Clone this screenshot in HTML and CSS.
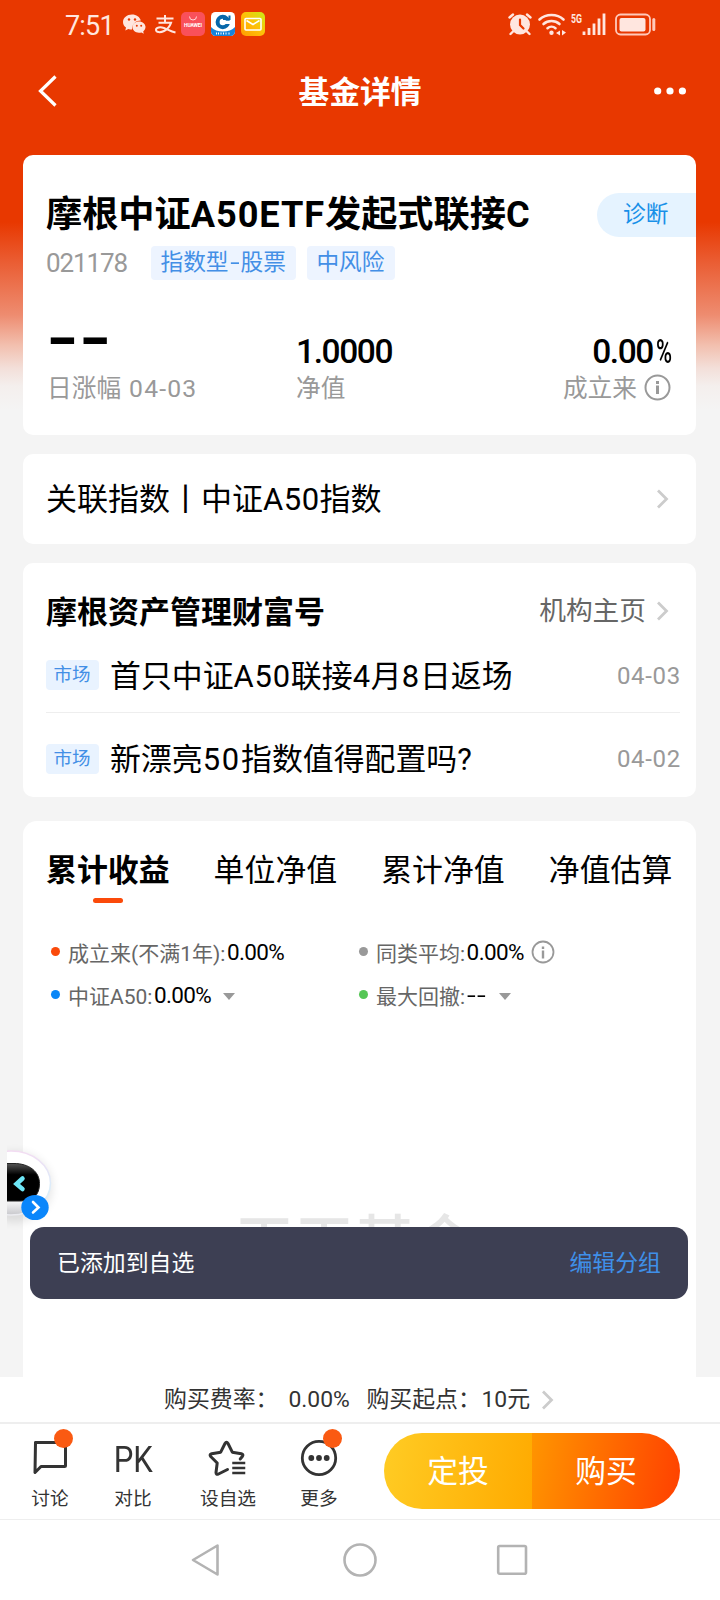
FILE: index.html
```html
<!DOCTYPE html>
<html lang="zh-CN">
<head>
<meta charset="utf-8">
<title>基金详情</title>
<link rel="stylesheet" href="styles.css">
</head>
<body>
<main class="page">
  <header class="status">
    <span class="clock">7:51</span>
    <div class="status-apps">
      <svg class="wechat" width="24" height="24" viewBox="0 0 24 24"><path fill="#ffe6df" d="M9 2.500C4 2.500 0 5.700 0 10c0 2.300 1.200 4.200 3 5.600L2.300 18.500l3-1.600c1.200.4 2.600.5 3.700.5C9 12 13 8.600 17.800 8.600 17 5 13.300 2.500 9 2.500z"/><circle cx="6" cy="7.500" r="1.200" fill="#e83800"/><circle cx="12" cy="7.500" r="1.200" fill="#e83800"/><path fill="#ffe6df" d="M16 9.500c-4 0-6.600 2.600-6.600 5.600s2.800 5.700 6.600 5.700c.8 0 1.700-.1 2.400-.4l2.400 1.300-.6-2.200c1.300-1 2.300-2.600 2.300-4.400 0-3-2.800-5.600-6.500-5.600z"/><circle cx="13.800" cy="13.700" r="1" fill="#e83800"/><circle cx="18.200" cy="13.700" r="1" fill="#e83800"/></svg>
      <svg class="alipay" width="24" height="24" viewBox="0 0 24 24" fill="none" stroke="#ffe6df" stroke-width="2"><path d="M3.500 6.500h17M12 3v7.500M5.500 10.800h12.500c-1.300 3.700-4 6.700-7 8.200-3.500 1.700-8 1.600-8-1.200 0-2.600 4.500-3.100 8-1.800 3.500 1.300 7 3.500 11.500 4.500"/></svg>
      <svg width="24" height="24" viewBox="0 0 24 24"><rect width="24" height="24" rx="5" fill="#f9505a"/><path d="M8.500 4.500a3.500 3.500 0 0 0 7 0" fill="none" stroke="#ffd9d9"/><text x="12" y="15" text-anchor="middle" textLength="18" class="tiny-logo">HUAWEI</text></svg>
      <svg width="24" height="24" viewBox="0 0 24 24"><rect width="24" height="24" rx="4.500" fill="#fff"/><path d="M0 15c5 6 19 6 24 0v4.500a4.500 4.500 0 0 1-4.500 4.500h-15A4.500 4.500 0 0 1 0 19.500z" fill="#1684dc"/><circle cx="11.800" cy="10" r="5.200" fill="none" stroke="#0768aa" stroke-width="4"/><path d="M11.500 8.700h9v3.300h-9z" fill="#fff"/><path d="M12 7h6.500v-3.500" fill="none" stroke="#0768aa" stroke-width="2"/><path d="M5.500 20.500v2M7.500 20.500v2M10 20.500v2M12.500 20.500v2M15 20.500v2M18 20.500v2" stroke="#fff"/></svg>
      <svg width="24" height="24" viewBox="0 0 24 24"><defs><linearGradient id="mail" x1="0" y1="1" x2="1" y2="0"><stop offset="0" stop-color="#ff9d00"/><stop offset=".5" stop-color="#ffbf08"/><stop offset="1" stop-color="#c9ec17"/></linearGradient></defs><rect width="24" height="24" rx="5" fill="url(#mail)"/><rect x="4" y="6.500" width="16" height="11.500" rx="1" fill="none" stroke="#fff" stroke-width="1.600"/><path d="M5.500 8.500l6.500 4 6.500-4" fill="none" stroke="#fff" stroke-width="1.600"/></svg>
    </div>
    <div class="status-sys">
      <svg width="24" height="24" viewBox="0 0 24 24"><circle cx="12" cy="12.500" r="10" fill="#ffe6df"/><path d="M1.500 5.500L5 2.500M22.500 5.500L19 2.500M5 19.500l-2.500 2.500M19 19.500l2.500 2.500" stroke="#ffe6df" stroke-width="2.400" stroke-linecap="round"/><path d="M12 7.500v5.500l3.500 3.500" fill="none" stroke="#e83800" stroke-width="2.200" stroke-linecap="round"/></svg>
      <svg class="wifi" width="30" height="24" viewBox="0 0 30 24" fill="none" stroke="#ffe6df" stroke-width="2.600" stroke-linecap="round"><path d="M2.500 7.500c6.500-6 17.500-6 24 0M6.500 12c4.500-4 11.500-4 16 0M10.500 16.200c2.300-2 5.700-2 8 0"/><circle cx="14.500" cy="20.800" r="2.200" fill="#ffe6df" stroke="none"/><path d="M23 18.500v5l-4-2.500zM25 18v5.500l4-3z" fill="#ffe6df" stroke="none"/></svg>
      <svg class="signal" width="36" height="24" viewBox="0 0 36 24"><text x="0" y="10.500" textLength="11" lengthAdjust="spacingAndGlyphs" class="net">5G</text><path d="M13 19.500v3.500M18 16v7M23 11.500v11.500M28 6.500v16.500M33 1.500v21.500" stroke="#ffe6df" stroke-width="2.800"/></svg>
      <svg width="42" height="24" viewBox="0 0 42 24"><rect x="1" y="2.500" width="34" height="20" rx="4.500" fill="none" stroke="#ffc9ba" stroke-width="1.800"/><rect x="4.500" y="6" width="26" height="13.500" rx="2" fill="#ffe6df"/><path d="M38.800 7.500v10" stroke="#ffc9ba" stroke-width="3" stroke-linecap="round"/></svg>
    </div>
  </header>
  <nav class="titlebar">
    <svg width="24" height="36" viewBox="0 0 24 36"><path d="M19.500 3.500L4.500 18l15 14.500" fill="none" stroke="#fff" stroke-width="3.200"/></svg>
    <h1>基金详情</h1>
    <svg width="34" height="10" viewBox="0 0 34 10" fill="#fff"><circle cx="4.700" cy="5" r="3.600"/><circle cx="17" cy="5" r="3.600"/><circle cx="29.400" cy="5" r="3.600"/></svg>
  </nav>

  <section class="card fund">
    <div class="fund-head"><h2>摩根中证<span class="lat">A50ETF</span>发起式联接<span class="lat">C</span></h2><a class="diagnose">诊断</a></div>
    <div class="fund-meta"><span class="code">021178</span><span class="tag">指数型<span class="hy">-</span>股票</span><span class="tag">中风险</span></div>
    <div class="stats">
      <div class="stat"><b class="dashes"><span>--</span></b><span class="stat-label">日涨幅 <span class="date">04-03</span></span></div>
      <div class="stat mid"><b class="num">1.0000</b><span class="stat-label">净值</span></div>
      <div class="stat last"><b class="num">0.00<span class="pct">%</span></b><span class="stat-label">成立来<svg width="27" height="27" viewBox="0 0 27 27"><circle cx="13.500" cy="13.500" r="12" fill="none" stroke="#999" stroke-width="2"/><path d="M13.500 11.500v8.500M13.500 7v3" stroke="#999" stroke-width="3"/></svg></span></div>
    </div>
  </section>

  <section class="card index"><span>关联指数丨中证<span class="lat">A50</span>指数</span><svg class="chev" width="14" height="22" viewBox="0 0 14 22"><path d="M2 2.500l8.500 8.500L2 19.500"/></svg></section>

  <section class="card news">
    <div class="news-head"><h3>摩根资产管理财富号</h3><span class="more-link">机构主页<svg class="chev" width="14" height="22" viewBox="0 0 14 22"><path d="M2 2.500l8.500 8.500L2 19.500"/></svg></span></div>
    <div class="news-row"><span class="mini">市场</span><span class="headline">首只中证<span class="lat">A50</span>联接<span class="lat">4</span>月<span class="lat">8</span>日返场</span><time>04-03</time></div>
    <div class="news-row second"><span class="mini">市场</span><span class="headline">新漂亮<span class="lat wide">50</span>指数值得配置吗<span class="lat">?</span></span><time>04-02</time></div>
  </section>

  <section class="card perf">
    <div class="tabs"><span class="tab on">累计收益</span><span class="tab">单位净值</span><span class="tab">累计净值</span><span class="tab">净值估算</span></div>
    <div class="legend">
      <div><i class="dot red"></i><span>成立来(不满1年):</span><b>0.00%</b></div>
      <div><i class="dot gray"></i><span>同类平均:</span><b>0.00%</b><svg class="info" width="24" height="24" viewBox="0 0 24 24"><circle cx="12" cy="12" r="10.500" fill="none" stroke="#999" stroke-width="1.800"/><path d="M12 10.500v8M12 6.500v2.500" stroke="#999" stroke-width="2.400"/></svg></div>
      <div><i class="dot blue"></i><span>中证A50:</span><b>0.00%</b><i class="tri"></i></div>
      <div><i class="dot green"></i><span>最大回撤:</span><b class="dd">--</b><i class="tri"></i></div>
    </div>
    <div class="watermark">天天基金</div>
  </section>

  <footer>
    <div class="fee"><span>购买费率：</span><span class="rate">0.00%</span><span class="start">购买起点：</span><span class="amount">10元</span><svg class="chev" width="14" height="22" viewBox="0 0 14 22"><path d="M2 2.500l8.500 8.500L2 19.500"/></svg></div>
    <div class="actions">
      <div class="act a1"><svg width="40" height="40" viewBox="0 0 40 40" fill="none" stroke="#333" stroke-width="3" stroke-linejoin="round"><path d="M5.500 6.500h29q1 0 1 1v22q0 1-1 1H11l-6 6z"/></svg><i class="badge"></i><span>讨论</span></div>
      <div class="act a2"><span class="pk">PK</span><span>对比</span></div>
      <div class="act a3"><svg width="40" height="40" viewBox="0 0 40 40" fill="none" stroke="#333" stroke-width="3" stroke-linecap="round" stroke-linejoin="round"><path d="M19.500 32.500L10.500 37q-2.500 1.200-2.500-1.500l1.200-9.500-6.500-6.500q-1.600-2 1-2.800l9-1.500 4.300-8.700q1.500-2.600 3 0l4.300 8.700 9 1.500q2.600.8 1 2.800l-2.100 2.500"/><path d="M25.500 26h10.500M25.500 31h10.500M25.500 36h10.500" stroke-linecap="square" stroke-width="2.500"/></svg><span>设自选</span></div>
      <div class="act a4"><svg width="40" height="40" viewBox="0 0 40 40"><circle cx="20" cy="21" r="16.700" fill="none" stroke="#333" stroke-width="2.800"/><g fill="#333"><circle cx="12.300" cy="21" r="2.900"/><circle cx="20" cy="21" r="2.900"/><circle cx="27.700" cy="21" r="2.900"/></g></svg><i class="badge"></i><span>更多</span></div>
      <div class="cta"><a class="plan">定投</a><a class="buy">购买</a></div>
    </div>
    <div class="sysnav">
      <svg width="32" height="36" viewBox="0 0 32 36"><path d="M3 18L27.500 3.500v29z"/></svg>
      <svg width="36" height="36" viewBox="0 0 36 36"><circle cx="18" cy="18" r="15.500"/></svg>
      <svg width="32" height="36" viewBox="0 0 32 36"><rect x="0.200" y="4" width="27.800" height="27.800" rx="1.500"/></svg>
    </div>
  </footer>

  <svg class="robot" width="58" height="90" viewBox="0 0 58 90"><defs><linearGradient id="shell" x1="0" y1="0" x2="0" y2="1"><stop offset="0" stop-color="#fff"/><stop offset=".75" stop-color="#fff"/><stop offset="1" stop-color="#c8c8cc"/></linearGradient><linearGradient id="rim" x1="0" y1="0" x2="0" y2="1"><stop offset="0" stop-color="#f3dcf2"/><stop offset=".6" stop-color="#d9eefb"/><stop offset="1" stop-color="#ececf0"/></linearGradient><linearGradient id="face" x1="0" y1="0" x2="0" y2="1"><stop offset="0" stop-color="#555"/><stop offset=".3" stop-color="#000"/></linearGradient><filter id="soft" x="-50%" y="-50%" width="200%" height="200%"><feGaussianBlur stdDeviation="5"/></filter></defs>
    <ellipse cx="8" cy="47" rx="37" ry="35" fill="#000" opacity=".1" filter="url(#soft)"/><ellipse cx="4" cy="43" rx="39.500" ry="32" fill="url(#shell)" stroke="url(#rim)" stroke-width="1.500"/><path d="M-6 23.500H7c15 0 25.500 8 25.500 20S26 61 13 61H-6z" fill="url(#face)" stroke="#222"/><path d="M15.500 38.500L9.500 44l6 5" fill="none" stroke="#6ee6f7" stroke-width="4.500" stroke-linecap="round"/><ellipse cx="28" cy="67.500" rx="13.700" ry="12.600" fill="#0a86fb"/><path d="M26 62l5.500 5.500-5.500 5" fill="none" stroke="#fff" stroke-width="2.600" stroke-linecap="round"/></svg>
  <div class="toast"><span>已添加到自选</span><a>编辑分组</a></div>
</main>
</body>
</html>
```
FILE: styles.css
```css
* { box-sizing: border-box; }
body { margin: 0; font-family: Roboto, "Noto Sans CJK SC", sans-serif; color: #000; background: #f4f4f4; }
h1, h2, h3, b, i { margin: 0; font-style: normal; }
svg { display: block; flex: none; }
.page {
  position: relative; width: 720px; height: 1600px; overflow: hidden;
  display: flex; flex-direction: column; align-items: center;
  background: linear-gradient(180deg, #e83800 0, #e83800 222px, #ea5d33 262px, #ee8c70 315px, #f2bfae 345px, #f3dfd9 368px, #f4efed 386px, #f4f4f4 410px);
}
.page > * { flex: none; white-space: nowrap; }

.status { width: 100%; height: 48px; display: flex; align-items: center; padding: 0 63px 0 65px; color: #ffe6df; }
.clock { font-size: 27px; line-height: 32px; width: 58px; letter-spacing: -0.8px; padding-top: 3px; }
.status-apps { display: flex; gap: 6px; }
.alipay { margin: 0 -1px 0 0; }
.status-apps svg:nth-child(3) { margin-left: -1px; }
.status-sys { display: flex; margin-left: auto; align-items: center; }
.wifi { margin-left: 5px; }
.signal { margin: 0 8px 0 4px; }
.net { font-size: 12px; font-weight: 700; fill: #ffe6df; }
.tiny-logo { font-size: 5px; font-weight: 700; fill: #fff; }

.titlebar { width: 100%; height: 107px; display: flex; align-items: flex-start; justify-content: space-between; padding: 0 33px 0 36px; }
.titlebar svg:first-child { margin-top: 25px; margin-right: 7px; }
.titlebar svg:last-child { margin-top: 38px; }
.titlebar h1 { font-size: 30.800px; line-height: 40px; font-weight: 700; color: #fff; margin-top: 25px; }

.card { width: 673px; margin-left: -1px; background: #fff; border-radius: 10px; padding-left: 23px; }
.fund { height: 280px; overflow: hidden; margin-bottom: 19px; }
.fund-head { display: flex; justify-content: space-between; padding-top: 38px; height: 88px; }
.fund-head h2 { font-size: 36.200px; line-height: 44px; font-weight: 700; }
.fund-head .lat { letter-spacing: .9px; }
.diagnose { width: 99px; height: 44px; border-radius: 22px 0 0 22px; background: #e5f3ff; color: #1890e8; font-size: 22.700px; line-height: 44px; padding-left: 26px; }
.fund-meta { display: flex; padding-top: 3px; height: 79px; align-items: flex-start; line-height: 34px; }
.code { width: 105px; font-size: 26px; color: #999; letter-spacing: -1.100px; }
.tag { height: 34px; border-radius: 4px; background: #edf4ff; color: #438fe6; font-size: 22.700px; line-height: 34px; padding: 0 10px 0 9.500px; margin-right: 11px; }
.hy { display: inline-block; width: 12px; text-align: center; transform: scaleX(1.500); }
.stats { display: flex; padding-right: 25px; }
.stat { display: flex; flex-direction: column; width: 250px; }
.stat.mid { width: 200px; }
.stat.last { margin-left: auto; width: auto; align-items: flex-end; }
.num, .dashes { font-weight: 500; font-size: 33.500px; line-height: 44px; height: 44px; letter-spacing: -1.400px; }
.stat .num { padding-top: 8px; line-height: 44px; }
.pct { display: inline-block; width: 15px; transform: scaleX(.65); transform-origin: left; margin-left: 3px; }
.dashes span { display: inline-block; transform: scaleX(1.410); transform-origin: left; font-weight: 700; font-size: 60px; line-height: 34px; letter-spacing: -.5px; }
.stat-label { display: flex; align-items: center; font-size: 24.700px; line-height: 36px; height: 36px; margin-top: 5px; color: #999; }
.stat:first-child .stat-label { padding-left: 1px; }
.date { letter-spacing: 1.200px; margin-left: 8px; }
.stat-label svg { margin-left: 7px; margin-top: -4px; }

.index { height: 90px; display: flex; align-items: center; justify-content: space-between; padding-right: 26px; font-size: 31px; line-height: 40px; margin-bottom: 19px; }
.index > span { padding-top: 1px; }
.index .lat { letter-spacing: .5px; }
.lat { letter-spacing: .8px; }
.chev path { fill: none; stroke: #ccc; stroke-width: 2.800; }

.news { height: 234px; margin-bottom: 24px; padding-right: 16px; }
.news-head { display: flex; justify-content: space-between; align-items: center; height: 97px; padding-right: 10px; }
.news-head h3 { font-size: 31px; line-height: 40px; font-weight: 700; padding-top: 2px; }
.more-link { display: flex; align-items: center; gap: 10px; font-size: 26.700px; color: #666; line-height: 34px; padding-bottom: 2px; }
.news-row { display: flex; align-items: center; padding-bottom: 21px; border-bottom: 1px solid #eee; height: 53px; }
.news-row.second { border: 0; padding: 0; height: 92px; }
.mini { width: 53px; height: 30px; border-radius: 4px; background: #e9f3ff; color: #438fe6; text-align: center; font-size: 18.500px; line-height: 30px; margin-right: 11px; margin-top: -1px; padding-right: 1px; }
.second .mini { margin-top: 0; }
.headline { font-size: 30.900px; line-height: 30px; padding-top: 2px; }
.headline .wide { letter-spacing: 1.800px; }
time { margin-left: auto; font-size: 24px; color: #999; letter-spacing: .7px; margin-right: -1px; }

.perf { height: 556px; border-radius: 14px 14px 0 0; overflow: hidden; }
.tabs { display: flex; padding-top: 29px; height: 109px; }
.tab { flex: none; width: 167.600px; font-size: 30.900px; line-height: 41px; position: relative; }
.tab.on { font-weight: 700; }
.tab.on::after { content: ""; position: absolute; left: 47px; top: 48px; width: 30px; height: 5px; border-radius: 3px; background: #fb4a0a; }
.legend { display: grid; grid-template-columns: 308px 300px; grid-auto-rows: 43px; font-size: 21px; color: #666; padding-left: 5px; }
.legend div { display: flex; align-items: center; }
.legend b { font-weight: 400; color: #000; font-size: 22.500px; margin-left: 1.500px; letter-spacing: -.6px; padding-top: 1px; }
.legend .dd { width: 20px; transform: scaleX(1.400); transform-origin: left; letter-spacing: 1px; }
.dot { width: 9px; height: 9px; border-radius: 50%; margin-right: 8px; }
.red { background: #fa4a0a; } .gray { background: #999; } .blue { background: #0a87f7; } .green { background: #55c655; }
.info { margin-left: 7px; }
.tri { border: 6px solid transparent; border-top: 7px solid #999; border-bottom: 0; margin-left: 12px; margin-top: 3px; }
.watermark { font-size: 60px; line-height: 70px; font-weight: 500; color: #e6e6e6; text-align: center; padding: 194px 33px 0 0; }

footer { width: 720px; height: 223px; background: #fff; color: #333; }
.fee { height: 47px; border-bottom: 2px solid #eee; display: flex; align-items: center; padding-left: 164px; font-size: 22.900px; line-height: 44px; }
.rate { width: 78px; margin-left: 10px; letter-spacing: 0; }
.start { width: 115px; }
.amount { width: 60px; }
.actions { height: 96px; border-bottom: 1px solid #eee; display: flex; }
.act { display: flex; flex-direction: column; align-items: center; position: relative; width: 84px; padding-top: 13px; font-size: 18.700px; line-height: 28px; }
.act svg, .pk { height: 40px; margin-bottom: 8px; }
.act.a1 svg { margin-top: -1px; margin-bottom: 9px; }
.pk { font-size: 37px; line-height: 45px; font-weight: 400; transform: scaleX(.84); }
.a1 { margin-left: 8px; } .a2 { margin-left: -1px; } .a3 { margin-left: 11px; } .a4 { margin-left: 7px; }
.badge { position: absolute; left: 46px; top: 5px; width: 19px; height: 19px; border-radius: 50%; background: #fa5a12; }
.cta { display: flex; width: 296px; height: 76px; margin: 9px 0 0 23px; border-radius: 38px; overflow: hidden; color: #fff; font-size: 30.800px; line-height: 78px; text-align: center; }
.cta a { flex: 1; }
.plan { background: linear-gradient(100deg, #ffcc24, #ffaa00); }
.buy { background: linear-gradient(100deg, #ff9500, #ff4000); }
.sysnav { display: flex; justify-content: center; padding-top: 22px; gap: 120px; }
.sysnav svg { fill: none; stroke: #b3b3b3; stroke-width: 2.600; stroke-linejoin: round; overflow: visible; }

.robot { position: absolute; left: 7px; top: 1140px; }
.toast { position: absolute; left: 30px; top: 1227px; width: 658px; height: 72px; border-radius: 14px; background: rgba(58, 60, 80, .985); display: flex; align-items: center; justify-content: space-between; padding: 0 27px 5px; color: #fff; font-size: 22.900px; }
.toast a { color: #3f8fe8; }
```
